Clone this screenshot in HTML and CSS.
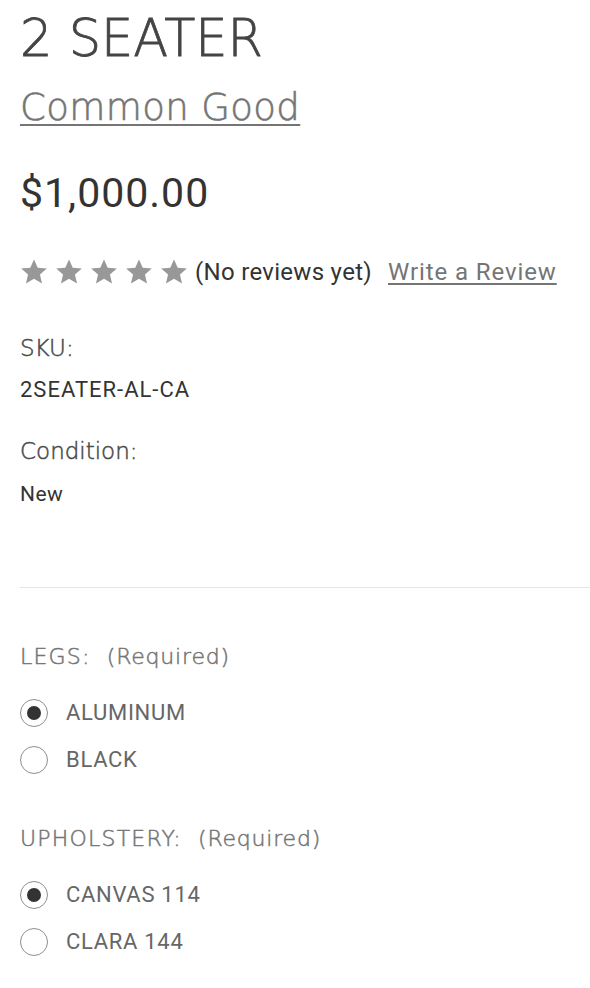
FILE: index.html
```html
<!DOCTYPE html>
<html lang="en">
<head>
<meta charset="utf-8">
<title>2 SEATER</title>
<link rel="stylesheet" href="styles.css">
</head>
<body>
<div class="product">
  <h1 class="title">2 SEATER</h1>
  <h2 class="brand"><a href="#">Common Good</a></h2>
  <div class="price">$1,000.00</div>
  <div class="rating">
    <span class="stars">
      <svg class="star" viewBox="0 0 24 24"><path d="M12 1.2l3.2 7.2 7.8.6-5.9 5.1 1.8 7.7L12 17.8l-6.9 4 1.8-7.7L1 9l7.8-.6z"/></svg>
      <svg class="star" viewBox="0 0 24 24"><path d="M12 1.2l3.2 7.2 7.8.6-5.9 5.1 1.8 7.7L12 17.8l-6.9 4 1.8-7.7L1 9l7.8-.6z"/></svg>
      <svg class="star" viewBox="0 0 24 24"><path d="M12 1.2l3.2 7.2 7.8.6-5.9 5.1 1.8 7.7L12 17.8l-6.9 4 1.8-7.7L1 9l7.8-.6z"/></svg>
      <svg class="star" viewBox="0 0 24 24"><path d="M12 1.2l3.2 7.2 7.8.6-5.9 5.1 1.8 7.7L12 17.8l-6.9 4 1.8-7.7L1 9l7.8-.6z"/></svg>
      <svg class="star" viewBox="0 0 24 24"><path d="M12 1.2l3.2 7.2 7.8.6-5.9 5.1 1.8 7.7L12 17.8l-6.9 4 1.8-7.7L1 9l7.8-.6z"/></svg>
    </span>
    <span class="count">(No reviews yet)</span>
    <a class="write" href="#">Write a Review</a>
  </div>
  <dl class="info">
    <dt class="info-label">SKU:</dt>
    <dd class="info-value sku">2SEATER-AL-CA</dd>
    <dt class="info-label">Condition:</dt>
    <dd class="info-value cond">New</dd>
  </dl>
  <hr class="divider">
  <div class="option">
    <div class="opt-label">LEGS: <small>(Required)</small></div>
    <label class="radio"><span class="circle checked"></span><span class="opt-text">ALUMINUM</span></label>
    <label class="radio"><span class="circle"></span><span class="opt-text">BLACK</span></label>
  </div>
  <div class="option">
    <div class="opt-label">UPHOLSTERY: <small>(Required)</small></div>
    <label class="radio"><span class="circle checked"></span><span class="opt-text">CANVAS 114</span></label>
    <label class="radio"><span class="circle"></span><span class="opt-text">CLARA 144</span></label>
  </div>
</div>
</body>
</html>
```
FILE: styles.css
```css
html, body {
  margin: 0;
  padding: 0;
  background: #fff;
}
body {
  font-family: Roboto, "Liberation Sans", sans-serif;
  color: #333;
}
.product {
  padding: 9px 0 0 20px;
}
.title {
  margin: 0;
  font-family: "DejaVu Sans", sans-serif;
  font-weight: 300;
  font-size: 51px;
  line-height: 60px;
  color: #444;
  -webkit-text-stroke: 0.8px #444;
}
.brand {
  margin: 17px 0 0;
  font-family: "DejaVu Sans", sans-serif;
  font-weight: 300;
  font-size: 37px;
  line-height: 44px;
  letter-spacing: 0.4px;
}
.brand a {
  color: #757575;
  -webkit-text-stroke: 0.6px #757575;
  text-decoration: underline;
  text-decoration-thickness: 2px;
  text-underline-offset: 4px;
}
.price {
  margin-top: 39px;
  font-size: 41px;
  line-height: 48px;
  color: #333;
  letter-spacing: 1px;
}
.rating {
  margin-top: 39px;
  display: flex;
  align-items: center;
  height: 32px;
  font-size: 24px;
  line-height: 32px;
}
.stars {
  display: flex;
  gap: 7px;
  margin-right: 7px;
}
.star {
  width: 28px;
  height: 28px;
  fill: #989898;
}
.count {
  color: #333;
  letter-spacing: 0.3px;
}
.write {
  margin-left: 16px;
  color: #757575;
  letter-spacing: 0.9px;
  text-decoration: underline;
  text-decoration-thickness: 2px;
  text-underline-offset: 3px;
}
.info {
  margin: 45px 0 0;
}
.info-label {
  font-family: "DejaVu Sans", sans-serif;
  font-weight: 300;
  font-size: 23px;
  line-height: 30px;
  color: #4a4a4a;
  -webkit-text-stroke: 0.5px #4a4a4a;
}
.info-value {
  margin: 13px 0 32px;
  font-size: 21px;
  line-height: 28px;
  color: #333;
}
.info-value.sku {
  font-size: 22px;
  letter-spacing: 1px;
}
.info-value.cond {
  margin: 14px 0 0;
  letter-spacing: 0.4px;
}
.divider {
  margin: 79px 0 0;
  border: 0;
  border-top: 1px solid #e5e5e5;
  height: 0;
}
.option {
  margin-top: 54px;
}
.option + .option {
  margin-top: 41px;
}
.opt-label {
  font-family: "DejaVu Sans", sans-serif;
  font-weight: 300;
  font-size: 22px;
  line-height: 30px;
  color: #757575;
  -webkit-text-stroke: 0.5px #757575;
  letter-spacing: 1.2px;
  margin-bottom: 17px;
}
.opt-label small {
  font-size: inherit;
  margin-left: 8px;
  letter-spacing: 0.8px;
}
.radio {
  display: flex;
  align-items: center;
  height: 47px;
  font-size: 22px;
  color: #666;
  letter-spacing: 0.7px;
}
.circle {
  box-sizing: border-box;
  width: 28px;
  height: 28px;
  border: 1px solid #8f8f8f;
  border-radius: 50%;
  margin-right: 18px;
  display: flex;
  align-items: center;
  justify-content: center;
}
.circle.checked::after {
  content: "";
  width: 14px;
  height: 14px;
  border-radius: 50%;
  background: #333;
}
```
